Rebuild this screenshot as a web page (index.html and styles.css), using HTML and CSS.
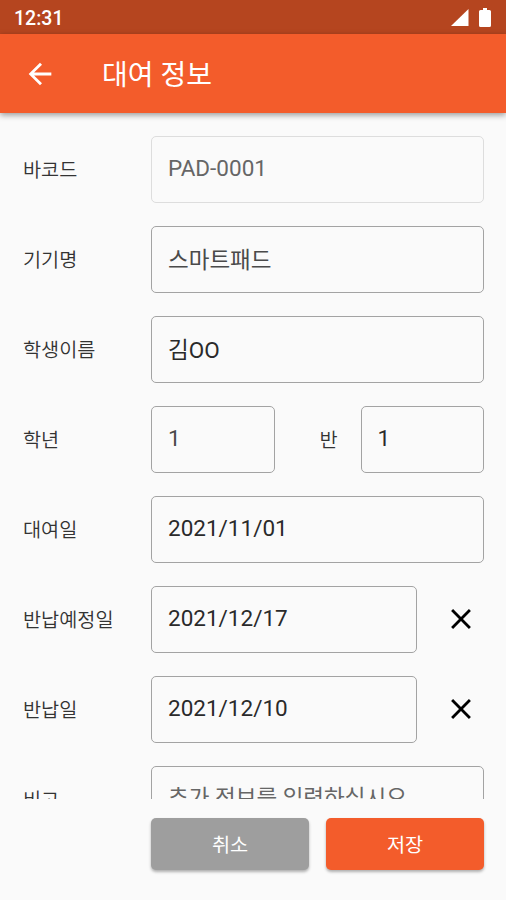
FILE: index.html
```html
<!DOCTYPE html>
<html lang="ko">
<head>
<meta charset="UTF-8">
<meta name="viewport" content="width=device-width, initial-scale=1.0">
<title>대여 정보</title>
<link rel="stylesheet" href="styles.css">
</head>
<body>
<div class="status-bar">
  <span class="clock">12:31</span>
  <svg class="signal" width="18" height="17" viewBox="0 0 18 17"><path d="M17.5 0v17H0z"/></svg>
  <svg class="battery" width="12" height="19" viewBox="0 0 12 19"><path d="M4 0h4v2h2.5q1.5 0 1.5 1.5v14q0 1.5-1.5 1.5h-9Q0 19 0 17.500v-14Q0 2 1.500 2H4z"/></svg>
</div>
<header class="app-bar">
  <a class="back" href="#" aria-label="뒤로">
    <svg width="34" height="34" viewBox="0 0 24 24"><path d="M20 11H7.830l5.590-5.590L12 4l-8 8 8 8 1.410-1.410L7.830 13H20v-2z"/></svg>
  </a>
  <h1>대여 정보</h1>
</header>
<form id="rentalForm">
  <div class="fields">
    <div class="row">
      <label for="barcode">바코드</label>
      <input type="text" id="barcode" value="PAD-0001" disabled>
    </div>
    <div class="row">
      <label for="device">기기명</label>
      <input class="readonly" type="text" id="device" value="스마트패드" readonly>
    </div>
    <div class="row">
      <label for="student">학생이름</label>
      <input type="text" id="student" value="김OO">
    </div>
    <div class="row">
      <label for="grade">학년</label>
      <input class="readonly" type="text" id="grade" value="1">
      <label class="class-label" for="class">반</label>
      <input type="text" id="class" value="1">
    </div>
    <div class="row">
      <label for="rentDate">대여일</label>
      <input type="text" id="rentDate" value="2021/11/01">
    </div>
    <div class="row">
      <label for="dueDate">반납예정일</label>
      <input type="text" id="dueDate" value="2021/12/17">
      <button class="clear" type="button" aria-label="지우기">
        <svg width="34" height="34" viewBox="0 0 24 24"><path d="M19 6.410L17.590 5 12 10.590 6.410 5 5 6.410 10.590 12 5 17.590 6.410 19 12 13.410 17.590 19 19 17.590 13.410 12z"/></svg>
      </button>
    </div>
    <div class="row">
      <label for="returnDate">반납일</label>
      <input type="text" id="returnDate" value="2021/12/10">
      <button class="clear" type="button" aria-label="지우기">
        <svg width="34" height="34" viewBox="0 0 24 24"><path d="M19 6.410L17.590 5 12 10.590 6.410 5 5 6.410 10.590 12 5 17.590 6.410 19 12 13.410 17.590 19 19 17.590 13.410 12z"/></svg>
      </button>
    </div>
    <div class="row">
      <label for="note">비고</label>
      <input type="text" id="note" placeholder="추가 정보를 입력하십시오">
    </div>
  </div>
  <div class="actions">
    <button class="btn cancel" type="button">취소</button>
    <button class="btn save" type="submit">저장</button>
  </div>
</form>
</body>
</html>
```
FILE: styles.css
```css
* {
  box-sizing: border-box;
}
body {
  margin: 0;
  height: 900px;
  display: flex;
  flex-direction: column;
  overflow: hidden;
  font-family: Roboto, "Noto Sans CJK KR", sans-serif;
  background-color: #fafafa;
  color: #333;
}
.status-bar {
  display: flex;
  align-items: center;
  flex: none;
  height: 34px;
  padding: 2px 15px 0 14px;
  background-color: #b5451f;
  color: #fff;
}
.clock {
  flex: 1;
  font-size: 19.5px;
  font-weight: 500;
}
.status-bar svg {
  margin-bottom: 2px;
  fill: #fff;
}
.battery {
  margin-left: 10px;
}
.app-bar {
  display: flex;
  align-items: center;
  flex: none;
  height: 79px;
  padding-left: 23px;
  background-color: #f35c2b;
  color: #fff;
  box-shadow: 0 2px 6px rgba(0, 0, 0, 0.4);
}
.back {
  height: 34px;
  fill: #fff;
}
.app-bar h1 {
  margin: 0 0 2px 45px;
  font-size: 28px;
  font-weight: 400;
}
form {
  display: flex;
  flex-direction: column;
  flex: 1;
}
.fields {
  display: flex;
  flex-direction: column;
  gap: 23px;
  height: 686px;
  padding: 23px 22px 0 23px;
  overflow: hidden;
}
.row {
  display: flex;
  align-items: center;
  flex: none;
}
label {
  flex: none;
  width: 128px;
  padding-bottom: 2px;
  font-size: 19.7px;
  font-weight: 350;
}
.class-label {
  width: 86px;
  padding-left: 45px;
}
input {
  flex: 1;
  min-width: 0;
  height: 67px;
  padding: 0 16px 3px;
  border: 1px solid #a3a3a3;
  border-radius: 5px;
  background: none;
  color: #2a2a2a;
  font-family: inherit;
  font-size: 22.5px;
  font-weight: 400;
}
input:disabled {
  border-color: #ddd;
  color: #666;
}
.readonly {
  color: #4a4a4a;
}
input::placeholder {
  color: #666;
}
.clear {
  flex: none;
  height: 36px;
  margin-left: 27px;
  padding: 0 6px 2px 0;
  border: none;
  background: none;
}
.clear svg {
  display: block;
}
.actions {
  display: flex;
  gap: 17px;
  padding: 19px 22px 0 151px;
}
.btn {
  flex: 1;
  height: 52px;
  padding-bottom: 2px;
  border: none;
  border-radius: 5px;
  color: #fff;
  font-family: inherit;
  font-size: 19.7px;
  font-weight: 400;
  box-shadow: 0 2px 3px rgba(0, 0, 0, 0.3);
}
.cancel {
  background-color: #9e9e9e;
}
.save {
  background-color: #f35c2b;
}
```
